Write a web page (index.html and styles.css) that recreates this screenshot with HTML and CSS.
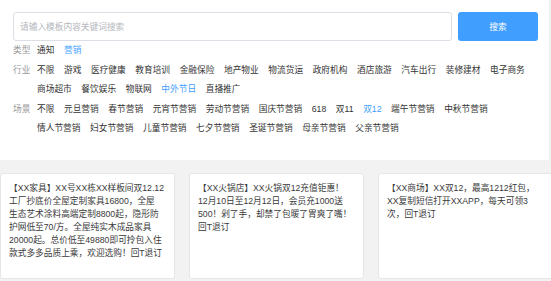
FILE: index.html
```html
<!DOCTYPE html>
<html>
<head>
<meta charset="utf-8">
<title>短信模板</title>
<link rel="stylesheet" href="styles.css">
</head>
<body>
<div class="top">
  <div class="search">
    <input class="search-input" type="text" placeholder="请输入模板内容关键词搜索">
    <button class="search-btn">搜索</button>
  </div>

  <div class="filter">
    <span class="filter-label">类型</span>
    <div class="filter-items">
      <span>通知</span><span class="active">营销</span>
    </div>
  </div>
  <div class="filter">
    <span class="filter-label">行业</span>
    <div class="filter-items">
      <span>不限</span><span>游戏</span><span>医疗健康</span><span>教育培训</span><span>金融保险</span><span>地产物业</span><span>物流货运</span><span>政府机构</span><span>酒店旅游</span><span>汽车出行</span><span>装修建材</span><span>电子商务</span><span>商场超市</span><span>餐饮娱乐</span><span>物联网</span><span class="active">中外节日</span><span>直播推广</span>
    </div>
  </div>
  <div class="filter">
    <span class="filter-label">场景</span>
    <div class="filter-items">
      <span>不限</span><span>元旦营销</span><span>春节营销</span><span>元宵节营销</span><span>劳动节营销</span><span>国庆节营销</span><span>618</span><span>双11</span><span class="active">双12</span><span>端午节营销</span><span>中秋节营销</span><span>情人节营销</span><span>妇女节营销</span><span>儿童节营销</span><span>七夕节营销</span><span>圣诞节营销</span><span>母亲节营销</span><span>父亲节营销</span>
    </div>
  </div>
</div>

<div class="cards">
  <div class="card">【XX家具】XX号XX栋XX样板间双12.12<br>工厂抄底价全屋定制家具16800，全屋<br>生态艺术涂料高端定制8800起，隐形防<br>护网低至70/方。全屋纯实木成品家具<br>20000起。总价低至49880即可拎包入住<br>款式多多品质上乘，欢迎选购！回T退订</div>
  <div class="card">【XX火锅店】XX火锅双12充值钜惠！<br>12月10日至12月12日，会员充1000送<br>500！剁了手，却禁了包暖了胃爽了嘴！<br>回T退订</div>
  <div class="card">【XX商场】XX双12，最高1212红包，<br>XX复制短信打开XXAPP，每天可领3<br>次，回T退订</div>
</div>
</body>
</html>
```

FILE: styles.css
```css
body {
  margin: 0;
  background: #f2f2f2;
  font-family: "Liberation Sans", "Noto Sans CJK SC", sans-serif;
  font-size: 8.7px;
  color: #333;
  overflow: hidden;
}

.top {
  width: 549px;
  height: 160px;
  box-sizing: border-box;
  padding: 12px 11px 0 13px;
  background: #fff;
}

.search {
  display: flex;
  gap: 6px;
  height: 29px;
}

.search-input {
  flex: 1;
  margin: 0;
  padding: 0 6px;
  border: 1px solid #dcdfe6;
  border-radius: 3px;
  font-family: inherit;
  font-size: 8.7px;
  color: #333;
  outline: none;
}

.search-input::placeholder {
  color: #b4b7bd;
}

.search-btn {
  width: 80px;
  margin: 0;
  border: none;
  border-radius: 3px;
  background: #409eff;
  color: #fff;
  font-family: inherit;
  font-size: 8.7px;
}

.filter {
  display: flex;
  line-height: 19.5px;
}

.filter:first-of-type {
  margin-top: 4.5px;
}

.filter-label {
  width: 24px;
  flex-shrink: 0;
  color: #999;
}

.filter-items {
  flex: 1;
  display: flex;
  flex-wrap: wrap;
  column-gap: 9.6px;
}

.filter-items .active {
  color: #409eff;
}

.cards {
  display: grid;
  grid-template-columns: repeat(3, 175px);
  column-gap: 14px;
  padding-top: 13px;
}

.card {
  height: 106px;
  box-sizing: border-box;
  padding: 8px 4px 0 8px;
  background: #fff;
  border: 1px solid #e6e6e6;
  border-radius: 3px;
  line-height: 13px;
  color: #3a3a3a;
  white-space: nowrap;
}
```
